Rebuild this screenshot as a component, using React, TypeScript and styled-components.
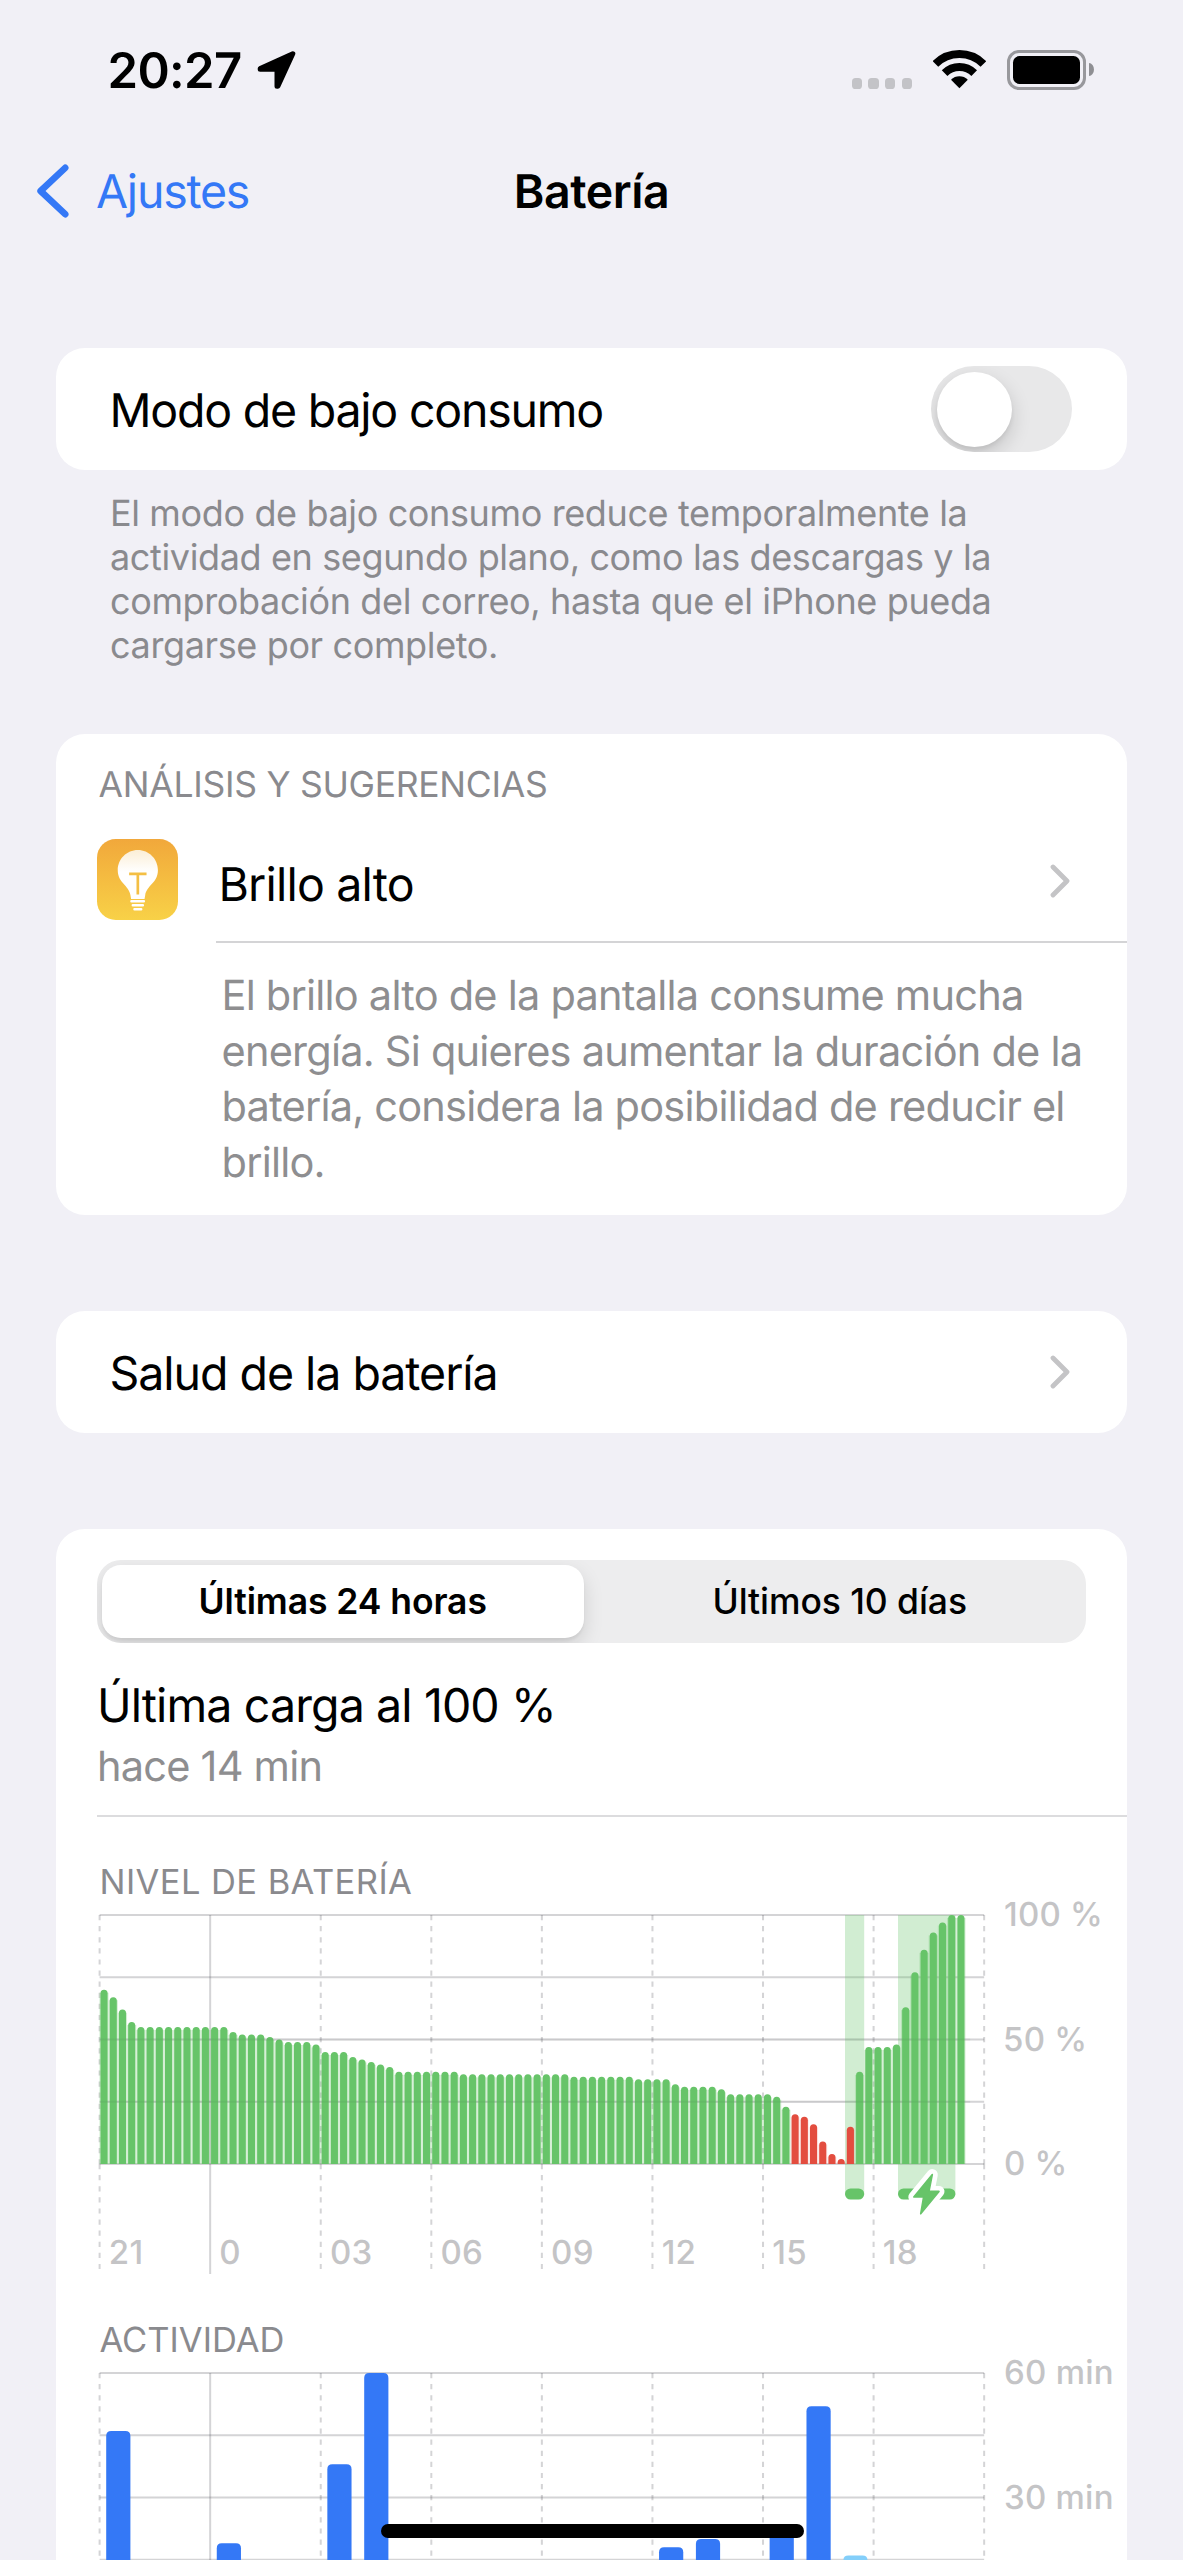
import React from "react";
import styled, { createGlobalStyle, css } from "styled-components";

const color = {
  page: "#f1f0f6",
  card: "#ffffff",
  blue: "#3478f6",
  lightBlue: "#84cffa",
  green: "#67c469",
  red: "#e34d3f",
  secondary: "#8a8a8e",
  tertiary: "#c4c4c6",
  grid: "rgba(60, 60, 67, 0.22)",
};

const GlobalStyle = createGlobalStyle`
  *, *::before, *::after { box-sizing: border-box; }
  body {
    margin: 0;
    background: ${color.page};
    font-family: Inter, "Liberation Sans", sans-serif;
    text-rendering: geometricPrecision;
  }
`;

/* ---------- text ---------- */

interface TextProps {
  $track?: number;
}

const BodyText = styled.span<TextProps>`
  font-size: 46.5px;
  line-height: 60px;
  letter-spacing: ${(p) => p.$track ?? -1}px;
  color: #000;
  white-space: nowrap;
`;

const Subhead = styled.p`
  margin: 0;
  font-size: 41.5px;
  line-height: 55.4px;
  letter-spacing: -0.77px;
  color: #8e8e90;
  white-space: nowrap;
`;

const Caption = styled.h2<TextProps>`
  margin: 0;
  font-size: 35.5px;
  font-weight: 400;
  line-height: 44px;
  letter-spacing: ${(p) => p.$track ?? 0}px;
  color: ${color.secondary};
  white-space: nowrap;
`;

/* ---------- screen ---------- */

const Screen = styled.div`
  position: relative;
  display: flex;
  flex-direction: column;
  width: 1183px;
  height: 2560px;
  overflow: hidden;
  background: ${color.page};
`;

const StatusBar = styled.header`
  display: flex;
  align-items: center;
  justify-content: space-between;
  height: 140px;
  padding: 0 89.5px 0 107.5px;
  flex: none;
`;

const StatusGroup = styled.div`
  display: flex;
  align-items: center;
`;

const Clock = styled.span`
  width: 149px;
  padding-top: 1px;
  font-size: 49px;
  font-weight: 600;
  line-height: 60px;
  letter-spacing: -0.65px;
`;

const SignalDots = styled.div`
  display: flex;
  gap: 6.2px;
  margin: 27px 21px 0 0;
`;

const Dot = styled.i`
  width: 10.4px;
  height: 10.4px;
  border-radius: 3.6px;
  background: #c3c3c7;
`;

const BatteryBody = styled.div`
  width: 78.5px;
  height: 39.3px;
  margin-left: 21px;
  padding: 3px;
  border: 3px solid #98989c;
  border-radius: 12px;
`;

const BatteryFill = styled.div`
  height: 100%;
  border-radius: 6.5px;
  background: #000;
`;

const BatteryNub = styled.i`
  width: 5px;
  height: 13px;
  margin-left: 3px;
  border-radius: 0 5px 5px 0 / 0 6.5px 6.5px 0;
  background: #8f8f93;
`;

const NavBar = styled.nav`
  display: grid;
  grid-template-columns: 1fr auto 1fr;
  align-items: center;
  height: 102px;
  padding: 0 36px;
  flex: none;
`;

const BackLink = styled.a`
  display: flex;
  align-items: center;
  gap: 26px;
  color: ${color.blue};

  ${BodyText} {
    padding-top: 1px;
    color: inherit;
  }
`;

const NavTitle = styled.h1`
  margin: 0;
  padding-top: 1px;
  font-size: 46.5px;
  font-weight: 600;
  line-height: 60px;
  letter-spacing: -0.45px;
`;

/* ---------- grouped list ---------- */

const Content = styled.main`
  display: flex;
  flex-direction: column;
  padding: 106px 56px 0;
`;

const Card = styled.section`
  flex: none;
  overflow: hidden;
  border-radius: 29px;
  background: ${color.card};
`;

const RowCard = styled(Card)`
  display: flex;
  align-items: center;
  justify-content: space-between;
  height: 122px;
  padding: 0 57px 0 53.5px;

  ${BodyText} {
    padding-top: 3px;
  }
`;

const Track = styled.div`
  width: 141px;
  height: 86px;
  margin-right: -2px;
  padding: 5.5px;
  border-radius: 43px;
  background: #e8e8e9;
  overflow: hidden;
`;

const Thumb = styled.div`
  width: 75px;
  height: 75px;
  border-radius: 50%;
  background: #fff;
  box-shadow: 0 8px 20px rgba(0, 0, 0, 0.16), 0 3px 4px rgba(0, 0, 0, 0.06);
`;

const Footnote = styled.p`
  margin: 20.8px 0 66.7px 54px;
  font-size: 36px;
  line-height: 44.2px;
  letter-spacing: -0.37px;
  color: ${color.secondary};
  white-space: nowrap;
`;

const InsightCard = styled(Card)`
  height: 480.5px;
  margin-bottom: 96.3px;
  padding: 29px 0 0 41px;

  > ${Caption} {
    padding-left: 1.6px;
  }
`;

const InsightRow = styled.div`
  display: flex;
  margin-top: 11px;
`;

const InsightIcon = styled.div`
  display: flex;
  align-items: center;
  width: 119px;
  height: 123px;
`;

const InsightBody = styled.div`
  flex: 1;
`;

const InsightTitle = styled.div`
  display: flex;
  align-items: center;
  justify-content: space-between;
  height: 124.5px;
  padding: 2px 57px 0 2.5px;
  border-bottom: 2px solid #d4d4d6;

  ${BodyText} {
    padding-top: 8px;
  }
`;

const InsightNote = styled(Subhead)`
  padding: 26.5px 0 0 5.5px;
`;

const UsageCard = styled(Card)`
  height: 1100px;
  margin-top: 96.3px;
  padding: 31px 0 0 41px;
`;

const Segments = styled.div`
  display: grid;
  grid-template-columns: 1fr 1fr;
  width: 989px;
  height: 83px;
  border-radius: 24px;
  background: #ededee;
  overflow: hidden;
`;

const Segment = styled.button<{ $active?: boolean }>`
  display: flex;
  align-items: center;
  justify-content: center;
  margin: 5px 8px 5.5px 4.8px;
  padding: 1.5px 0 0;
  border: 0;
  border-radius: 19px;
  background: transparent;
  font: 500 35.5px/44px Inter, "Liberation Sans", sans-serif;
  letter-spacing: -0.08px;
  color: #000;

  ${(p) =>
    p.$active
      ? css`
          background: #fff;
          font-weight: 600;
          box-shadow: 0 8px 20px rgba(0, 0, 0, 0.13), 0 3px 3px rgba(0, 0, 0, 0.05);
        `
      : css`
          margin-right: 4px;
          margin-left: 6px;
        `}
`;

const LastCharge = styled.div`
  display: flex;
  flex-direction: column;
  gap: 4px;
  margin-top: 33px;
  padding-bottom: 19.5px;
  border-bottom: 2px solid #dcdcde;
`;

const ChartBlock = styled.div<{ $top: number }>`
  margin-top: ${(p) => p.$top}px;

  ${Caption} {
    padding: 1px 0 0 2.5px;
    font-size: 34.5px;
    line-height: 43px;
  }
`;

const ChartSvg = styled.svg`
  display: block;
  overflow: visible;

  text {
    font-size: 33px;
    font-weight: 500;
    letter-spacing: 0.25px;
    fill: ${color.tertiary};
  }
`;

const HomeIndicator = styled.div`
  position: absolute;
  left: 381px;
  bottom: 22px;
  width: 422.5px;
  height: 14px;
  border-radius: 7px;
  background: #000;
`;

/* ---------- icons ---------- */

const LocationArrow = () => (
  <svg width="40" height="40" viewBox="0 0 40 40">
    <path
      d="M35.8 3.8 3.2 18.6V19.2H20V36.2H20.9Z"
      stroke="#000"
      strokeWidth="5"
      strokeLinejoin="round"
    />
  </svg>
);

const Wifi = () => (
  <svg width="53" height="39" viewBox="0 0 53 39">
    <g fill="none" stroke="#000" strokeWidth="8">
      <path d="M2.4 14A34 34 0 0 1 50.4 14" />
      <path d="M11.6 23.2A21 21 0 0 1 41.2 23.2" />
    </g>
    <path d="M26.4 38.3 18 29.8A12 12 0 0 1 34.8 29.8Z" />
  </svg>
);

const BackChevron = () => (
  <svg width="34" height="54" viewBox="0 0 34 54">
    <path
      d="M29.2 3.8 4.6 27 29.2 50.2"
      fill="none"
      stroke={color.blue}
      strokeWidth="6.6"
      strokeLinecap="round"
      strokeLinejoin="round"
    />
  </svg>
);

const Disclosure = () => (
  <svg width="20" height="34" viewBox="0 0 20 34">
    <path
      d="M3 3 17 17 3 31"
      fill="none"
      stroke={color.tertiary}
      strokeWidth="4.8"
      strokeLinecap="round"
      strokeLinejoin="round"
    />
  </svg>
);

const BulbIcon = () => (
  <svg width="81" height="81" viewBox="0 0 242 242">
    <defs>
      <linearGradient id="tile" x1="0" y1="0" x2="0" y2="1">
        <stop offset="0" stopColor="#f1a83b" />
        <stop offset="1" stopColor="#f8d147" />
      </linearGradient>
      <linearGradient id="glass" x1="0" y1="0" x2="0" y2="1">
        <stop offset="0" stopColor="#fbeed6" />
        <stop offset="0.45" stopColor="#fff" />
      </linearGradient>
    </defs>
    <rect width="242" height="242" rx="56" fill="url(#tile)" />
    <path
      d="M122 33C155 33 182 60 182 93C182 131 148 138 144 168L142 179H102L100 168C96 138 62 131 62 93C62 60 89 33 122 33Z"
      fill="url(#glass)"
    />
    <path d="M96 104H148M122 104V166" fill="none" stroke="#f4bf44" strokeWidth="8" />
    <path d="M103 186H140M107 198H137M112 210H132" stroke="#fff" strokeWidth="7.5" strokeLinecap="round" />
  </svg>
);

/* ---------- charts ---------- */

const LEFT = 2.6;
const STEP = 110.57;
const TOP = 11;
const PLOT = 249;
const RIGHT = LEFT + STEP * 8;
const HOURS = ["21", "0", "03", "06", "09", "12", "15", "18", ""];

const repeat = (value: number, times: number): number[] => Array(times).fill(value);

const LEVELS: number[] = [
  70, 67, 62, 57, ...repeat(55, 10), 53, 52, 52, 52, 51, 50, 49, 49, 49, 48,
  45, 45, 45, 43, 42, 41, 40, 39, ...repeat(37, 7), ...repeat(36, 12),
  ...repeat(35, 7), ...repeat(34, 4), 32, ...repeat(31, 4), 30,
  ...repeat(28, 5), 27, 23, 20, 19, 16, 9, 4, 2, 15, 37, 47, 47, 47, 48, 63,
  77, 86, 93, 97, 100, 100,
];

const isLow = (index: number) => index >= 75 && index <= 81;

const ACTIVITY: { hour: number; minutes: number; idle?: boolean }[] = [
  { hour: 0, minutes: 46 },
  { hour: 3, minutes: 19 },
  { hour: 6, minutes: 38 },
  { hour: 7, minutes: 60 },
  { hour: 15, minutes: 18 },
  { hour: 16, minutes: 20 },
  { hour: 18, minutes: 22 },
  { hour: 19, minutes: 52 },
  { hour: 20, minutes: 16, idle: true },
];

const Grid = ({ tail }: { tail: number }) => (
  <g fill="none" stroke={color.grid} strokeWidth="2">
    {[0, 1, 2, 3, 4].map((row) => {
      const y = TOP + (PLOT / 4) * row;
      return <line key={row} x1={LEFT} x2={RIGHT} y1={y} y2={y} />;
    })}
    {HOURS.map((_, col) => {
      const x = LEFT + STEP * col;
      const base = TOP + PLOT;
      return col === 1 ? (
        <path key={col} d={`M${x} ${TOP}V${base + tail + 5}`} />
      ) : (
        <path key={col} d={`M${x} ${TOP}V${base}M${x} ${base}V${base + tail}`} strokeDasharray="5.2 5.9" />
      );
    })}
  </g>
);

const columnPath = (x: number, width: number, height: number, radius: number) => {
  const base = TOP + PLOT;
  const r = Math.min(radius, height);
  const y = base - height;
  return `M${x} ${base}V${y + r}Q${x} ${y} ${x + r} ${y}H${x + width - r}Q${x + width} ${y} ${x + width} ${y + r}V${base}Z`;
};

const LevelChart = () => {
  const pitch = STEP / 12;
  return (
    <ChartSvg width="1030" height="386" viewBox="0 0 1030 386">
      <Grid tail={105} />
      <rect x="748" y={TOP} width="19.2" height="280" fill={color.green} opacity="0.3" />
      <rect x="801" y={TOP} width="57.4" height="280" fill={color.green} opacity="0.3" />
      <rect x="748" y="284.5" width="19.2" height="11" rx="5.5" fill={color.green} />
      <rect x="801" y="284.5" width="57.4" height="11" rx="5.5" fill={color.green} />
      <path
        d="M835.3 270.6 816.8 293H826.6L823.7 309.8 842 287.4H832Z"
        fill={color.green}
        stroke="#fff"
        strokeWidth="11"
        strokeLinejoin="round"
      />
      <path
        d="M835.3 270.6 816.8 293H826.6L823.7 309.8 842 287.4H832Z"
        fill={color.green}
        stroke={color.green}
        strokeWidth="1.6"
        strokeLinejoin="round"
      />
      {LEVELS.map((level, index) => {
        const x = LEFT + index * pitch + 0.9;
        const height = (level / 100) * PLOT;
        const fill = isLow(index) ? color.red : color.green;
        return (
          <g key={index} fill={fill}>
            <rect
              x={x - 1.1}
              y={TOP + PLOT - Math.max(height - 3, 0)}
              width={pitch}
              height={Math.max(height - 3, 0)}
              opacity={isLow(index) ? 0.1 : 0.28}
            />
            <path d={columnPath(x, 7.1, height, 3.5)} />
          </g>
        );
      })}
      <g stroke="rgba(60, 60, 67, 0.07)" strokeWidth="2">
        <line x1={LEFT} x2={RIGHT - 14} y1={TOP + PLOT * 0.5} y2={TOP + PLOT * 0.5} />
        <line x1={LEFT} x2={RIGHT - 14} y1={TOP + PLOT * 0.75} y2={TOP + PLOT * 0.75} />
      </g>
      <text x="907" y="22.3">100 %</text>
      <text x="906" y="146.5">50 %</text>
      <text x="907" y="271">0 %</text>
      {HOURS.map((label, col) => (
        <text key={col} x={LEFT + STEP * col + 9.2} y="360.3">
          {label}
        </text>
      ))}
    </ChartSvg>
  );
};

const ActivityChart = () => (
  <ChartSvg width="1030" height="300" viewBox="0 0 1030 300">
    <Grid tail={30} />
    {ACTIVITY.map(({ hour, minutes, idle }) => (
      <path
        key={hour}
        d={columnPath(LEFT + 6.6 + (STEP / 3) * hour, 24.2, (minutes / 60) * PLOT, 5)}
        fill={idle ? color.lightBlue : color.blue}
      />
    ))}
    <text x="907" y="22.3">60 min</text>
    <text x="907" y="146.7">30 min</text>
  </ChartSvg>
);

/* ---------- page ---------- */

export default function App() {
  return (
    <Screen>
      <GlobalStyle />
      <StatusBar>
        <StatusGroup>
          <Clock>20:27</Clock>
          <LocationArrow />
        </StatusGroup>
        <StatusGroup>
          <SignalDots>
            <Dot />
            <Dot />
            <Dot />
            <Dot />
          </SignalDots>
          <Wifi />
          <BatteryBody>
            <BatteryFill />
          </BatteryBody>
          <BatteryNub />
        </StatusGroup>
      </StatusBar>

      <NavBar>
        <BackLink>
          <BackChevron />
          <BodyText $track={-1.23}>Ajustes</BodyText>
        </BackLink>
        <NavTitle>Batería</NavTitle>
      </NavBar>

      <Content>
        <RowCard>
          <BodyText $track={-1.22}>Modo de bajo consumo</BodyText>
          <Track>
            <Thumb />
          </Track>
        </RowCard>
        <Footnote>
          El modo de bajo consumo reduce temporalmente la
          <br />
          actividad en segundo plano, como las descargas y la
          <br />
          comprobación del correo, hasta que el iPhone pueda
          <br />
          cargarse por completo.
        </Footnote>

        <InsightCard>
          <Caption $track={-0.29}>ANÁLISIS Y SUGERENCIAS</Caption>
          <InsightRow>
            <InsightIcon>
              <BulbIcon />
            </InsightIcon>
            <InsightBody>
              <InsightTitle>
                <BodyText $track={-0.8}>Brillo alto</BodyText>
                <Disclosure />
              </InsightTitle>
              <InsightNote>
                El brillo alto de la pantalla consume mucha
                <br />
                energía. Si quieres aumentar la duración de la
                <br />
                batería, considera la posibilidad de reducir el
                <br />
                brillo.
              </InsightNote>
            </InsightBody>
          </InsightRow>
        </InsightCard>

        <RowCard>
          <BodyText $track={-1.04}>Salud de la batería</BodyText>
          <Disclosure />
        </RowCard>

        <UsageCard>
          <Segments>
            <Segment $active>Últimas 24 horas</Segment>
            <Segment>Últimos 10 días</Segment>
          </Segments>
          <LastCharge>
            <BodyText $track={-0.88}>Última carga al 100 %</BodyText>
            <Subhead>hace 14 min</Subhead>
          </LastCharge>
          <ChartBlock $top={43}>
            <Caption $track={0.42}>NIVEL DE BATERÍA</Caption>
            <LevelChart />
          </ChartBlock>
          <ChartBlock $top={28}>
            <Caption>ACTIVIDAD</Caption>
            <ActivityChart />
          </ChartBlock>
        </UsageCard>
      </Content>
      <HomeIndicator />
    </Screen>
  );
}
